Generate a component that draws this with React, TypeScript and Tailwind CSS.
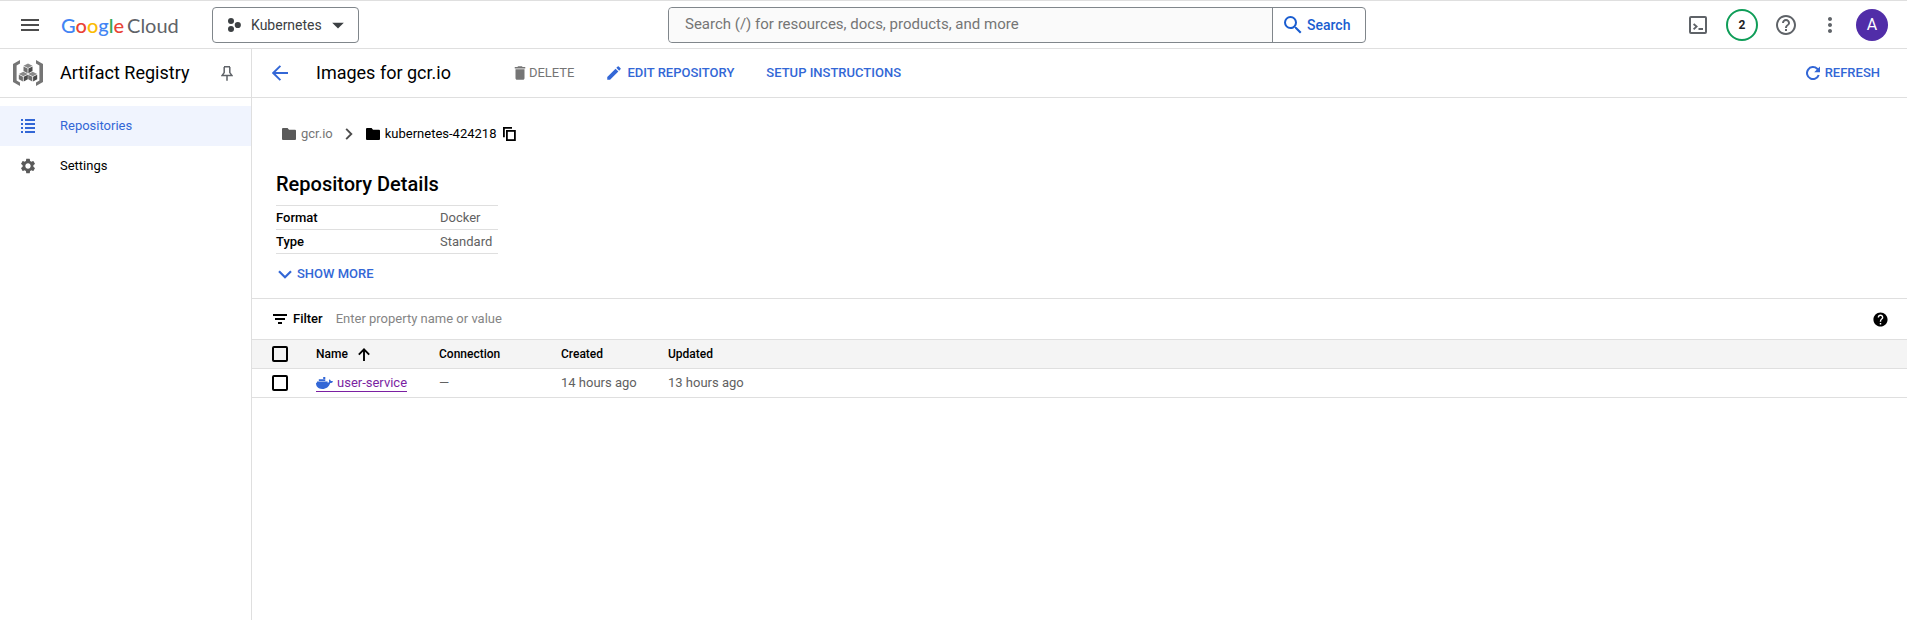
import React from 'react';
import {
  MdArrowDropDown,
  MdDelete,
  MdEdit,
  MdHelp,
  MdHelpOutline,
  MdMenu,
  MdMoreVert,
  MdSearch,
  MdSettings,
} from 'react-icons/md';

function ProjectIcon() {
  return (
    <svg viewBox="0 0 14 14" className="size-3.5 fill-[#3c4043]" aria-hidden="true">
      <circle cx="4" cy="3" r="3" />
      <circle cx="10.8" cy="7" r="3.1" />
      <circle cx="4" cy="11" r="3" />
    </svg>
  );
}

function RegistryIcon() {
  const cube = (x: number, y: number) => (
    <g transform={`translate(${x} ${y})`}>
      <path d="M4.5 0 9 2.2 4.5 4.4 0 2.2Z" fill="#8a8a8a" />
      <path d="M0 3 4.1 5v4.6L0 7.4Z" fill="#707070" />
      <path d="M9 3 4.9 5v4.6L9 7.4Z" fill="#4a4a4a" />
    </g>
  );
  return (
    <svg viewBox="0 0 30 26" className="h-[26px] w-[30px] shrink-0" aria-hidden="true">
      <path d="M7 0v3.6L3.6 5.4v15.2L7 22.4V26L0 22V4Z" fill="#757575" />
      <path d="M23 0v3.6l3.4 1.8v15.2L23 22.4V26l7-4V4Z" fill="#757575" />
      {cube(10.5, 3.6)}
      {cube(5.8, 11.8)}
      {cube(15.2, 11.8)}
    </svg>
  );
}

function ListIcon() {
  return (
    <svg viewBox="0 0 14 14" className="size-3.5 fill-[#3367d6]" aria-hidden="true">
      <path d="M0 0h2v2H0zM4 0h10v2H4zM0 4h2v2H0zM4 4h10v2H4zM0 8h2v2H0zM4 8h10v2H4zM0 12h2v2H0zM4 12h10v2H4z" />
    </svg>
  );
}

function ShellIcon() {
  return (
    <svg viewBox="0 0 18 18" className="size-[18px] fill-none stroke-[#5f6368] stroke-2" aria-hidden="true">
      <rect x="1" y="1" width="16" height="16" rx="1" />
      <path d="m4.6 8 3 2.6-3 2.6M9.5 13H14" strokeWidth="1.8" />
    </svg>
  );
}

function PinIcon() {
  return (
    <svg viewBox="0 0 12 15" className="h-[15px] w-3" fill="none" stroke="currentColor" strokeWidth="1.5" aria-hidden="true">
      <path d="M3 .8h6M3.2 1v5.6L1.2 9.4h9.6l-2-2.8V1M6 9.4v5.4" />
    </svg>
  );
}

function BackIcon() {
  return (
    <svg viewBox="0 0 16 16" className="size-4" fill="none" stroke="currentColor" strokeWidth="1.9" aria-hidden="true">
      <path d="M16 8H1.6M8.4 .8 1.2 8l7.2 7.2" />
    </svg>
  );
}

function RefreshIcon() {
  return (
    <svg viewBox="0 0 14 14" className="size-3.5" aria-hidden="true">
      <path d="M12.700 9A6 6 0 1 1 11.200 2.800L12.600 4.200" fill="none" stroke="currentColor" strokeWidth="2" />
      <path d="M14 .4v5.800H8.200Z" fill="currentColor" />
    </svg>
  );
}

function UpIcon() {
  return (
    <svg viewBox="0 0 12 13" className="h-[13px] w-3" fill="none" stroke="currentColor" strokeWidth="1.9" aria-hidden="true">
      <path d="M6 13V1.6M.8 6.6 6 1.4l5.2 5.2" />
    </svg>
  );
}

function FolderIcon({ className }: { className: string }) {
  return (
    <svg viewBox="0 0 14 12" className={className} fill="currentColor" aria-hidden="true">
      <path d="M1 0h4.6L7 1.8h6a1 1 0 0 1 1 1V11a1 1 0 0 1-1 1H1a1 1 0 0 1-1-1V1a1 1 0 0 1 1-1Z" />
    </svg>
  );
}

function CopyIcon() {
  return (
    <svg viewBox="0 0 13 14" className="h-3.5 w-[13px]" fill="none" stroke="currentColor" strokeWidth="1.8" aria-hidden="true">
      <path d="M.9 10.2V.9H9" />
      <rect x="3.9" y="3.9" width="8" height="9.2" />
    </svg>
  );
}

function FilterIcon() {
  return (
    <svg viewBox="0 0 14 10" className="h-2.5 w-3.5" fill="currentColor" aria-hidden="true">
      <path d="M0 0h14v2H0zM2 4h10v2H2zM5 8h4v2H5z" />
    </svg>
  );
}

function WhaleIcon() {
  return (
    <svg viewBox="0 0 17 12" className="h-3 w-[17px] fill-[#3367d6]" aria-hidden="true">
      <path d="M7.2 0h2.1v1.9H7.2zM2.8 2.2h6.5v1.9H2.8zM1 4.4h10.6v1.7H1z" />
      <path d="M0 5.8h11.4c.9 0 1.5-.3 1.8-.7-.5-1-.3-2 .3-2.8.8.5 1.2 1.1 1.3 1.8.8-.1 1.6 0 2.2.4-.5 1-1.4 1.5-2.7 1.5C13 9.7 10.3 12 6.2 12 2.3 12 0 9.8 0 5.8Z" />
    </svg>
  );
}

function Chevron({ className }: { className: string }) {
  return (
    <svg viewBox="0 0 14 9" className={className} fill="none" stroke="currentColor" strokeWidth="2.2" aria-hidden="true">
      <path d="m1 1.2 6 6 6-6" />
    </svg>
  );
}

function Logo() {
  return (
    <a href="#home" className="flex w-[117px] items-baseline gap-[3px] whitespace-nowrap font-['Lato',sans-serif] text-xl leading-6">
      <span className="font-medium">
        <span className="text-[#4285f4]">G</span>
        <span className="text-[#ea4335]">o</span>
        <span className="text-[#fbbc04]">o</span>
        <span className="text-[#4285f4]">g</span>
        <span className="text-[#34a853]">l</span>
        <span className="text-[#ea4335]">e</span>
      </span>
      <span className="text-[#5f6368]">Cloud</span>
    </a>
  );
}

function TopBar() {
  return (
    <header className="flex h-[49px] items-center border-y border-[#dfdfdf]">
      <button aria-label="Main menu" className="ml-[18px] mr-[19px] text-[#4d4d4d]">
        <MdMenu className="size-6" />
      </button>
      <Logo />
      <button className="ml-[34px] flex h-9 w-[147px] items-center rounded border border-[#80868b] pl-3.5 text-sm text-[#3c4043]">
        <ProjectIcon />
        <span className="ml-2.5">Kubernetes</span>
        <MdArrowDropDown className="ml-0.5 size-7" />
      </button>
      <div className="flex flex-1 justify-center px-4">
        <form className="flex h-9 w-full max-w-[698px] rounded border border-[#80868b]" onSubmit={(e) => e.preventDefault()}>
          <input
            type="search"
            aria-label="Search"
            placeholder="Search (/) for resources, docs, products, and more"
            className="min-w-0 flex-1 rounded-l bg-[#fafafa] px-4 text-[15px] outline-none placeholder:text-[#757575]"
          />
          <button className="flex w-[93px] items-center border-l border-[#80868b] pl-2 text-sm font-medium text-[#1a5dd0]">
            <MdSearch className="mr-0.5 size-6" />
            Search
          </button>
        </form>
      </div>
      <div className="flex items-center pl-3.5 pr-[19px] text-[#5f6368]">
        <button aria-label="Cloud Shell">
          <ShellIcon />
        </button>
        <button
          aria-label="2 notifications"
          className="ml-[19px] size-8 rounded-full border-2 border-[#0f9d58] text-xs font-bold text-[#202124]"
        >
          2
        </button>
        <button aria-label="Help" className="ml-4">
          <MdHelpOutline className="size-6" />
        </button>
        <button aria-label="More" className="ml-5">
          <MdMoreVert className="size-6" />
        </button>
        <button aria-label="Account" className="ml-3.5 size-8 rounded-full bg-[#512da8] text-base text-white">
          A
        </button>
      </div>
    </header>
  );
}

function Sidebar() {
  return (
    <aside className="w-[252px] shrink-0 border-r border-[#dfdfdf]">
      <div className="flex h-[49px] items-center border-b border-[#dfdfdf] pl-[13px] pr-[18px]">
        <RegistryIcon />
        <h2 className="ml-[17px] flex-1 text-lg">Artifact Registry</h2>
        <button aria-label="Pin menu" className="text-[#5f6368]">
          <PinIcon />
        </button>
      </div>
      <nav className="flex flex-col pt-2 text-[13px]">
        <a href="#repositories" className="flex h-10 items-center gap-[25px] bg-[#f0f4fe] pl-[21px] text-[#3367d6]">
          <ListIcon />
          Repositories
        </a>
        <a href="#settings" className="flex h-10 items-center gap-[23px] pl-[19px]">
          <MdSettings className="size-[18px] text-[#5a5a5a]" />
          Settings
        </a>
      </nav>
    </aside>
  );
}

function ActionBar() {
  return (
    <div className="flex h-[49px] items-center border-b border-[#dfdfdf] pl-5 pr-[27px] text-[13px] font-medium text-[#3367d6]">
      <a href="#back" aria-label="Back">
        <BackIcon />
      </a>
      <h1 className="ml-7 text-lg font-normal text-black">Images for gcr.io</h1>
      <button disabled className="ml-[60px] flex items-center font-normal text-[#757575]">
        <MdDelete className="size-[18px]" />
        DELETE
      </button>
      <button className="ml-[30px] flex items-center gap-[5px]">
        <MdEdit className="size-[18px]" />
        EDIT REPOSITORY
      </button>
      <button className="ml-8">SETUP INSTRUCTIONS</button>
      <button className="ml-auto flex items-center gap-[5px]">
        <RefreshIcon />
        REFRESH
      </button>
    </div>
  );
}

function Breadcrumbs() {
  return (
    <nav aria-label="Breadcrumb" className="flex h-5 items-center text-[13px]">
      <a href="#gcr" className="flex items-center gap-[5px] text-[#757575]">
        <FolderIcon className="h-3 w-3.5 text-[#5a5a5a]" />
        gcr.io
      </a>
      <Chevron className="ml-2.5 mr-[11px] h-2 w-3 -rotate-90 text-[#4d4d4d]" />
      <a href="#project" className="flex items-center gap-[5px]">
        <FolderIcon className="h-3 w-3.5" />
        kubernetes-424218
      </a>
      <button aria-label="Copy path" className="ml-[7px]">
        <CopyIcon />
      </button>
    </nav>
  );
}

function Details() {
  const rows = [
    ['Format', 'Docker'],
    ['Type', 'Standard'],
  ];
  return (
    <section className="mt-7">
      <h2 className="text-xl leading-6 font-medium">Repository Details</h2>
      <table className="mt-[9px] w-[222px] border-collapse text-left text-[13px] leading-[23px]">
        <tbody>
          {rows.map(([k, v]) => (
            <tr key={k} className="border-y border-[#dfdfdf]">
              <th className="w-[164px] p-0 font-medium">{k}</th>
              <td className="p-0 text-[#616161]">{v}</td>
            </tr>
          ))}
        </tbody>
      </table>
      <button className="mt-2.5 ml-[2px] flex h-5 items-center gap-[5px] text-[13px] font-medium text-[#3367d6]">
        <Chevron className="h-[9px] w-3.5" />
        SHOW MORE
      </button>
    </section>
  );
}

function Check({ label }: { label: string }) {
  return (
    <input type="checkbox" aria-label={label} className="block size-4 appearance-none rounded-[2px] border-2 border-black checked:bg-black" />
  );
}

function Images() {
  return (
    <section className="mt-3.5 border-t border-[#dfdfdf] text-[13px]">
      <div className="flex h-10 items-center pl-[21px] pr-[18px]">
        <label htmlFor="filter" className="flex items-center gap-1.5 font-medium">
          <FilterIcon />
          Filter
        </label>
        <input
          id="filter"
          placeholder="Enter property name or value"
          className="ml-[13px] min-w-0 flex-1 outline-none placeholder:text-[#858585]"
        />
        <button aria-label="Filter help">
          <MdHelp className="size-[17px]" />
        </button>
      </div>
      <table className="w-full table-fixed border-collapse text-left">
        <colgroup>
          <col className="w-16" />
          <col className="w-[123px]" />
          <col className="w-[122px]" />
          <col className="w-[107px]" />
          <col />
        </colgroup>
        <thead>
          <tr className="h-[29px] border-y border-[#dfdfdf] bg-[#f4f4f4] text-xs *:p-0 *:font-medium">
            <th>
              <div className="pl-5">
                <Check label="Select all images" />
              </div>
            </th>
            <th aria-sort="ascending">
              <button className="flex items-center gap-2.5 font-medium">
                Name
                <UpIcon />
              </button>
            </th>
            <th>Connection</th>
            <th>Created</th>
            <th>Updated</th>
          </tr>
        </thead>
        <tbody>
          <tr className="h-[29px] border-b border-[#dfdfdf] text-[#616161] *:p-0">
            <td>
              <div className="pl-5">
                <Check label="Select user-service" />
              </div>
            </td>
            <td>
              <div className="flex">
                <a href="#user-service" className="flex items-center gap-1 border-b border-[#7b1fa2] leading-4 text-[#7b1fa2]">
                  <WhaleIcon />
                  user-service
                </a>
              </div>
            </td>
            <td>—</td>
            <td>14 hours ago</td>
            <td>13 hours ago</td>
          </tr>
        </tbody>
      </table>
    </section>
  );
}

export default function App() {
  return (
    <div className="flex min-h-screen flex-col bg-white font-['Roboto',sans-serif] text-black">
      <TopBar />
      <div className="flex flex-1">
        <Sidebar />
        <main className="min-w-0 flex-1">
          <ActionBar />
          <div className="pt-[26px] pl-6">
            <div className="pl-1.5">
              <Breadcrumbs />
            </div>
            <Details />
          </div>
          <Images />
        </main>
      </div>
    </div>
  );
}
